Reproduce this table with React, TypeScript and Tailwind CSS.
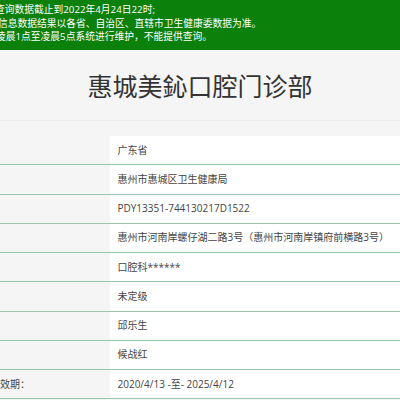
import React from "react";

const rows = [
  { label: "", value: "广东省" },
  { label: "", value: "惠州市惠城区卫生健康局" },
  { label: "", value: "PDY13351-744130217D1522" },
  { label: "", value: "惠州市河南岸螺仔湖二路3号（惠州市河南岸镇府前横路3号）" },
  { label: "", value: "口腔科******" },
  { label: "", value: "未定级" },
  { label: "", value: "邱乐生" },
  { label: "", value: "候战红" },
  { label: "有效期：", value: "2020/4/13 -至- 2025/4/12" },
];

const App = () => {
  return (
    <div className="w-[400px] h-[400px] overflow-hidden bg-[#f5f5f5] font-['Open_Sans','Noto_Sans_CJK_SC',sans-serif]">
      <div className="h-[50px] bg-[#0b800b] pt-[3px] text-[9.75px] leading-[13.5px] text-white whitespace-nowrap overflow-hidden">
        <div className="ml-[-5px]">查询数据截止到2022年4月24日22时;</div>
        <div className="ml-[-2px]">信息数据结果以各省、自治区、直辖市卫生健康委数据为准。</div>
        <div className="ml-[-4px]">凌晨1点至凌晨5点系统进行维护，不能提供查询。</div>
      </div>

      <div className="h-[71px] border-b border-[#ebebeb] flex items-center justify-center">
        <h1 className="text-[25px] leading-none text-[#333] mt-[2px]">惠城美鈊口腔门诊部</h1>
      </div>

      <div className="mt-[15px]">
        {rows.map((r, i) => (
          <div
            key={i}
            className="flex h-[29.25px] border-b-[1.5px] border-[#9bc6ad] text-[10px] text-[#444] whitespace-nowrap"
          >
            <div className="w-[110px] shrink-0 flex items-center overflow-hidden">
              <span className="ml-[-10px]">{r.label}</span>
            </div>
            <div className="flex-1 bg-white flex items-center pl-[7.5px]">{r.value}</div>
          </div>
        ))}
      </div>
    </div>
  );
};

export default App;
